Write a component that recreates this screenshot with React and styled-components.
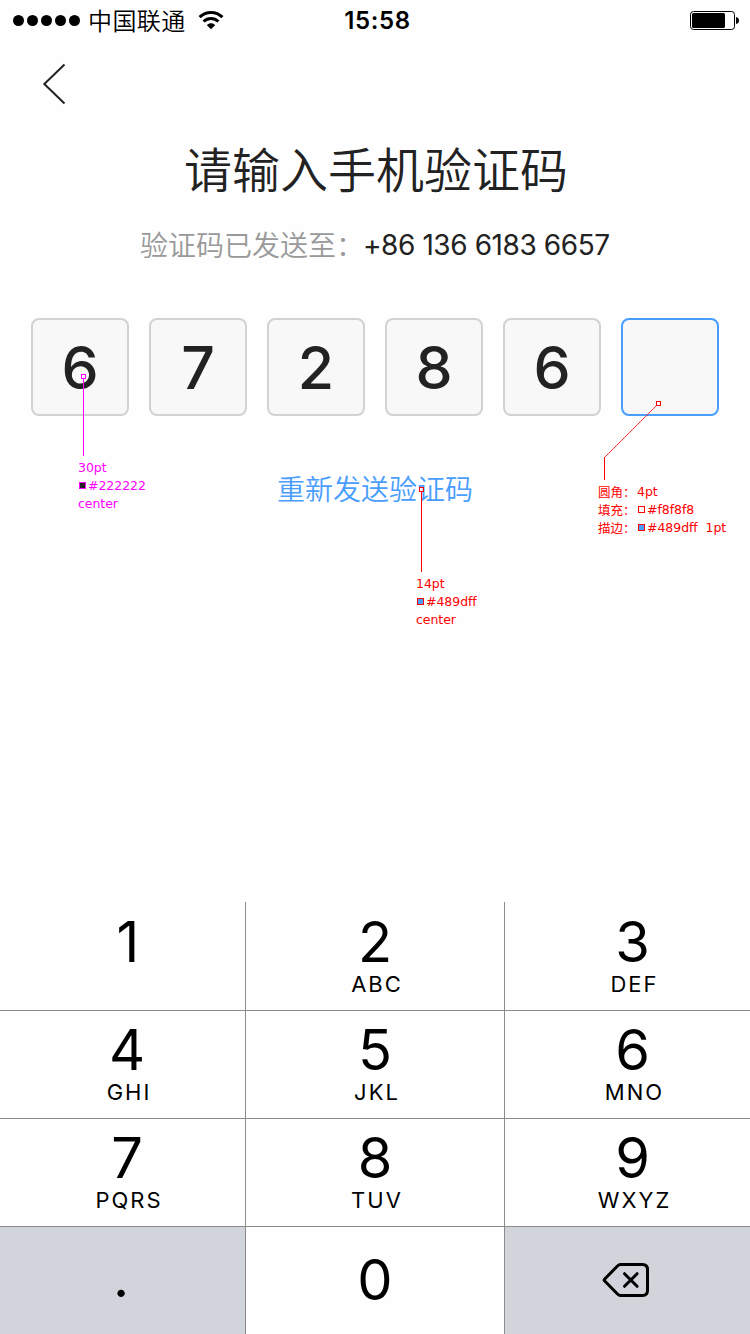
import React from "react";
import styled, { createGlobalStyle } from "styled-components";

const GlobalStyle = createGlobalStyle`
  *, *::before, *::after { box-sizing: border-box; }
  body {
    margin: 0;
    background: #fefefe;
    color: #222222;
    font-family: Inter, "Noto Sans CJK SC", sans-serif;
  }
  button { font: inherit; color: inherit; border: 0; padding: 0; background: none; }
`;

const Screen = styled.div`
  position: relative;
  width: 750px;
  height: 1334px;
  display: flex;
  flex-direction: column;
  overflow: hidden;
`;

const StatusBar = styled.header`
  height: 40px;
  padding: 0 11px 0 13px;
  display: grid;
  grid-template-columns: 1fr auto 1fr;
  align-items: center;
  color: #000;
`;

const StatusLeft = styled.div`
  display: flex;
  align-items: center;
`;

const SignalDots = styled.div`
  display: flex;
  gap: 3px;
`;

const SignalDot = styled.i`
  width: 11px;
  height: 11px;
  border-radius: 50%;
  background: #000;
`;

const Carrier = styled.span`
  margin: 0 12px 0 8px;
  padding-bottom: 1px;
  font: 350 24px/39px "Noto Sans CJK SC", sans-serif;
  letter-spacing: 0.4px;
`;

const Clock = styled.time`
  padding: 2px 0 0 3px;
  font-size: 24px;
  font-weight: 600;
  line-height: 38px;
  letter-spacing: 0.6px;
`;

const StatusRight = styled.div`
  display: flex;
  justify-content: flex-end;
`;

const NavBar = styled.nav`
  height: 88px;
  padding: 23px 0 0 42px;
`;

const BackButton = styled.button`
  display: block;
  width: 24px;
  height: 42px;
`;

const Title = styled.h1`
  margin: 3px 0 0;
  padding-left: 2px;
  font: 350 48px/72px "Noto Sans CJK SC", sans-serif;
  text-align: center;
`;

const SentTo = styled.p`
  margin: 22px 0 0;
  padding-left: 140px;
  height: 40px;
  display: flex;
  align-items: center;
  line-height: 40px;
`;

const SentLabel = styled.span`
  width: 223px;
  padding-bottom: 2px;
  color: #999999;
  font: 350 28px/38px "Noto Sans CJK SC", sans-serif;
  white-space: nowrap;
`;

const Phone = styled.span`
  font-size: 28px;
  letter-spacing: -0.42px;
  white-space: nowrap;
`;

const CodeRow = styled.div`
  margin-top: 53px;
  padding-left: 31px;
  display: flex;
  gap: 20px;
`;

const CodeBox = styled.div`
  width: 98px;
  height: 98px;
  display: flex;
  align-items: center;
  justify-content: center;
  border: 2px solid ${(p) => (p.$active ? "#489dff" : "#d2d2d2")};
  border-radius: 8px;
  background: #f8f8f8;
  font-size: 59px;
  font-weight: 500;
`;

const Resend = styled.button`
  align-self: center;
  margin-top: 52px;
  color: #489dff;
  font: 350 28px/40px "Noto Sans CJK SC", sans-serif;
`;

const Keypad = styled.div`
  margin-top: auto;
  display: grid;
  grid-template-columns: 245px 258px 245px;
  grid-template-rows: 108px repeat(3, 107px);
  gap: 1px;
  background: #8c8c8c;
  color: #000;
`;

const Key = styled.button`
  display: flex;
  flex-direction: column;
  align-items: center;
  justify-content: ${(p) => (p.$single ? "center" : "flex-end")};
  padding: 0 ${(p) => (p.$single && p.$muted ? 3 : 0)}px ${(p) => p.$bottom ?? 13}px ${(p) => p.$shift || 0}px;
  background: ${(p) => (p.$muted ? "#d1d4db" : "#fefefe")};
`;

const Digit = styled.span`
  font-size: 56px;
  line-height: 56px;
`;

const Letters = styled.span`
  height: 26px;
  margin-top: 1px;
  padding-left: 4px;
  font-size: 22px;
  line-height: 26px;
  letter-spacing: 2px;
`;

const Note = styled.aside`
  position: absolute;
  left: ${(p) => p.$x}px;
  top: ${(p) => p.$y}px;
  color: ${(p) => p.$color};
  font: 12.5px/18px "DejaVu Sans", "Noto Sans CJK SC", sans-serif;
  letter-spacing: -0.05px;
  white-space: pre;
`;

const NoteLine = styled.div`
  height: 18px;
  display: flex;
  align-items: center;
`;

const NoteLabel = styled.span`
  width: 39px;
  font-family: "Noto Sans CJK SC", sans-serif;
  font-size: 12.5px;
`;

const Swatch = styled.i`
  width: 7px;
  height: 7px;
  margin: 0 2px 1px 1px;
  border: 1px solid currentColor;
  background: ${(p) => p.$fill};
`;

const Leaders = styled.svg`
  position: absolute;
  left: 0;
  top: 0;
  pointer-events: none;
`;

const KEYS = [
  ["1", "", 11], ["2", "ABC", 0], ["3", "DEF", 10],
  ["4", "GHI", 9], ["5", "JKL", 0], ["6", "MNO", 10],
  ["7", "PQRS", 9], ["8", "TUV", 0], ["9", "WXYZ", 10],
];

function WifiIcon() {
  return (
    <svg width="26" height="20" viewBox="0 0 26 20" fill="none" stroke="#000" strokeWidth="3.1">
      <path d="M1.600 7.2C8 .9 18 .9 24.400 7.2" />
      <path d="M5.600 11.500c4.2-4 10.6-4 14.8 0" />
      <path d="M8.900 15.200c2.4-2.500 5.800-2.500 8.200 0L13 19.200z" fill="#000" stroke="none" />
    </svg>
  );
}

function BatteryIcon() {
  return (
    <svg width="49" height="19" viewBox="0 0 49 19">
      <rect x=".5" y=".5" width="44" height="18" rx="3" fill="none" stroke="#000" />
      <rect x="2" y="2" width="33" height="15" rx="1.5" />
      <path d="M46 6c4 0.6 4 6.400 0 7z" />
    </svg>
  );
}

function DeleteIcon() {
  return (
    <svg width="48" height="36" viewBox="0 0 48 36" fill="none" stroke="#000" strokeWidth="3" strokeLinecap="round" strokeLinejoin="round">
      <path d="M18.500 2.500H40.500Q45.500 2.500 45.500 7.500V28.500Q45.500 33.500 40.500 33.500H18.500Q17 33.500 15.500 32L2.500 18.800Q1.800 18 2.500 17.200L15.500 4Q17 2.500 18.500 2.500Z" />
      <path d="M22.500 11.700l12.600 12.600M35.100 11.700L22.500 24.300" />
    </svg>
  );
}

export default function App() {
  return (
    <Screen>
      <GlobalStyle />
      <StatusBar>
        <StatusLeft>
          <SignalDots>
            {[0, 1, 2, 3, 4].map((n) => <SignalDot key={n} />)}
          </SignalDots>
          <Carrier>中国联通</Carrier>
          <WifiIcon />
        </StatusLeft>
        <Clock>15:58</Clock>
        <StatusRight><BatteryIcon /></StatusRight>
      </StatusBar>

      <NavBar>
        <BackButton aria-label="返回">
          <svg width="24" height="42" viewBox="0 0 24 42" fill="none" stroke="#222" strokeWidth="2">
            <path d="M22.500 1.500L2.300 21L22.500 40.500" />
          </svg>
        </BackButton>
      </NavBar>

      <Title>请输入手机验证码</Title>
      <SentTo>
        <SentLabel>验证码已发送至：</SentLabel>
        <Phone>+86 136 6183 6657</Phone>
      </SentTo>

      <CodeRow>
        {["6", "7", "2", "8", "6", ""].map((d, i) => (
          <CodeBox key={i} $active={d === ""}>{d}</CodeBox>
        ))}
      </CodeRow>

      <Resend>重新发送验证码</Resend>

      <Keypad>
        {KEYS.map(([digit, letters, shift]) => (
          <Key key={digit} $shift={shift}>
            <Digit>{digit}</Digit>
            <Letters>{letters}</Letters>
          </Key>
        ))}
        <Key $single $muted $bottom={8}><Digit>.</Digit></Key>
        <Key $single $bottom={1}><Digit>0</Digit></Key>
        <Key $single $muted $bottom={2} aria-label="删除"><DeleteIcon /></Key>
      </Keypad>

      <Leaders width="750" height="640" fill="none" shapeRendering="crispEdges">
        <g stroke="#ff00ff">
          <rect x="81.500" y="374.500" width="4" height="4" />
          <path d="M83.500 379V456" />
        </g>
        <g stroke="#ff0000">
          <rect x="419.500" y="487.500" width="4" height="4" />
          <path d="M421.500 492V572" />
          <rect x="656.500" y="401.500" width="4" height="4" />
          <path d="M604.500 457V480" />
          <path d="M656.500 405.500L604.500 457.500" strokeWidth=".8" shapeRendering="auto" />
        </g>
      </Leaders>

      <Note $x={78} $y={459} $color="#ff00ff">
        <NoteLine>30pt</NoteLine>
        <NoteLine><Swatch $fill="#222222" />#222222</NoteLine>
        <NoteLine>center</NoteLine>
      </Note>
      <Note $x={416} $y={575} $color="#ff0000">
        <NoteLine>14pt</NoteLine>
        <NoteLine><Swatch $fill="#489dff" />#489dff</NoteLine>
        <NoteLine>center</NoteLine>
      </Note>
      <Note $x={598} $y={483} $color="#ff0000">
        <NoteLine><NoteLabel>圆角：</NoteLabel>4pt</NoteLine>
        <NoteLine><NoteLabel>填充：</NoteLabel><Swatch $fill="#f8f8f8" />#f8f8f8</NoteLine>
        <NoteLine><NoteLabel>描边：</NoteLabel><Swatch $fill="#489dff" />#489dff  1pt</NoteLine>
      </Note>
    </Screen>
  );
}
